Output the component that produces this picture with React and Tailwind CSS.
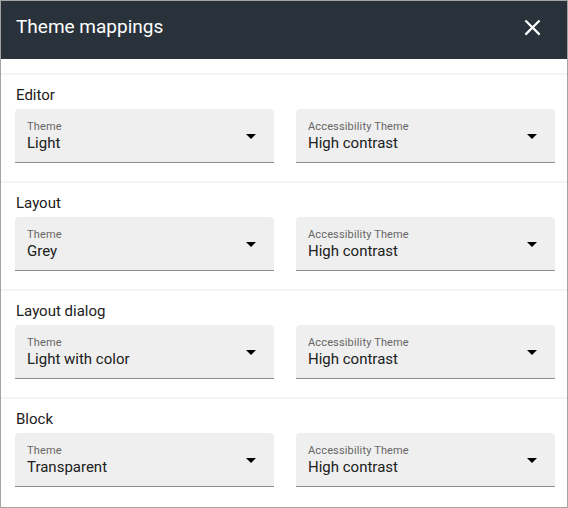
import React from "react";

const sections = [
  { name: "Editor", theme: "Light", a11y: "High contrast" },
  { name: "Layout", theme: "Grey", a11y: "High contrast" },
  { name: "Layout dialog", theme: "Light with color", a11y: "High contrast" },
  { name: "Block", theme: "Transparent", a11y: "High contrast" },
];

function SelectField({ label, value }) {
  return (
    <div className="flex items-center h-[54px] bg-[#efefef] rounded-t-[4px] border-b border-[#8d8d8d] pl-[12px] pr-[11px]">
      <div className="flex-1 min-w-0 pt-[1px]">
        <div className="text-[11px] leading-[13px] tracking-[0.15px] text-[#666666]">{label}</div>
        <div className="text-[15px] leading-[20px] text-[#202020]">{value}</div>
      </div>
      <svg width="24" height="24" viewBox="0 0 24 24" className="shrink-0">
        <path d="M7 10l5 5 5-5z" fill="#000" />
      </svg>
    </div>
  );
}

export default function App() {
  return (
    <div
      className="w-[568px] h-[508px] border border-[#a3a3a3] bg-white flex flex-col overflow-hidden"
      style={{ fontFamily: "Roboto, 'Liberation Sans', sans-serif" }}
    >
      {/* Header */}
      <div className="h-[58px] shrink-0 bg-[#29323a] flex items-center justify-between pl-[15px] pr-[21px] pb-[6px]">
        <h1 className="text-[19px] leading-[28px] text-white">Theme mappings</h1>
        <svg width="27" height="27" viewBox="0 0 24 24">
          <path
            d="M19 6.41L17.59 5 12 10.59 6.41 5 5 6.41 10.59 12 5 17.59 6.41 19 12 13.41 17.59 19 19 17.59 13.41 12z"
            fill="#fff"
          />
        </svg>
      </div>

      {/* Sections */}
      <div className="pt-[14px]">
        {sections.map((s) => (
          <div
            key={s.name}
            className="border-t-2 border-[#f4f4f4] pl-[14px] pt-[9px] pb-[18px]"
          >
            <div className="text-[15px] leading-[22px] text-[#202020] pl-px mb-[3px]">
              {s.name}
            </div>
            <div className="grid grid-cols-[259px_259px] gap-[22px]">
              <SelectField label="Theme" value={s.theme} />
              <SelectField label="Accessibility Theme" value={s.a11y} />
            </div>
          </div>
        ))}
      </div>
    </div>
  );
}
